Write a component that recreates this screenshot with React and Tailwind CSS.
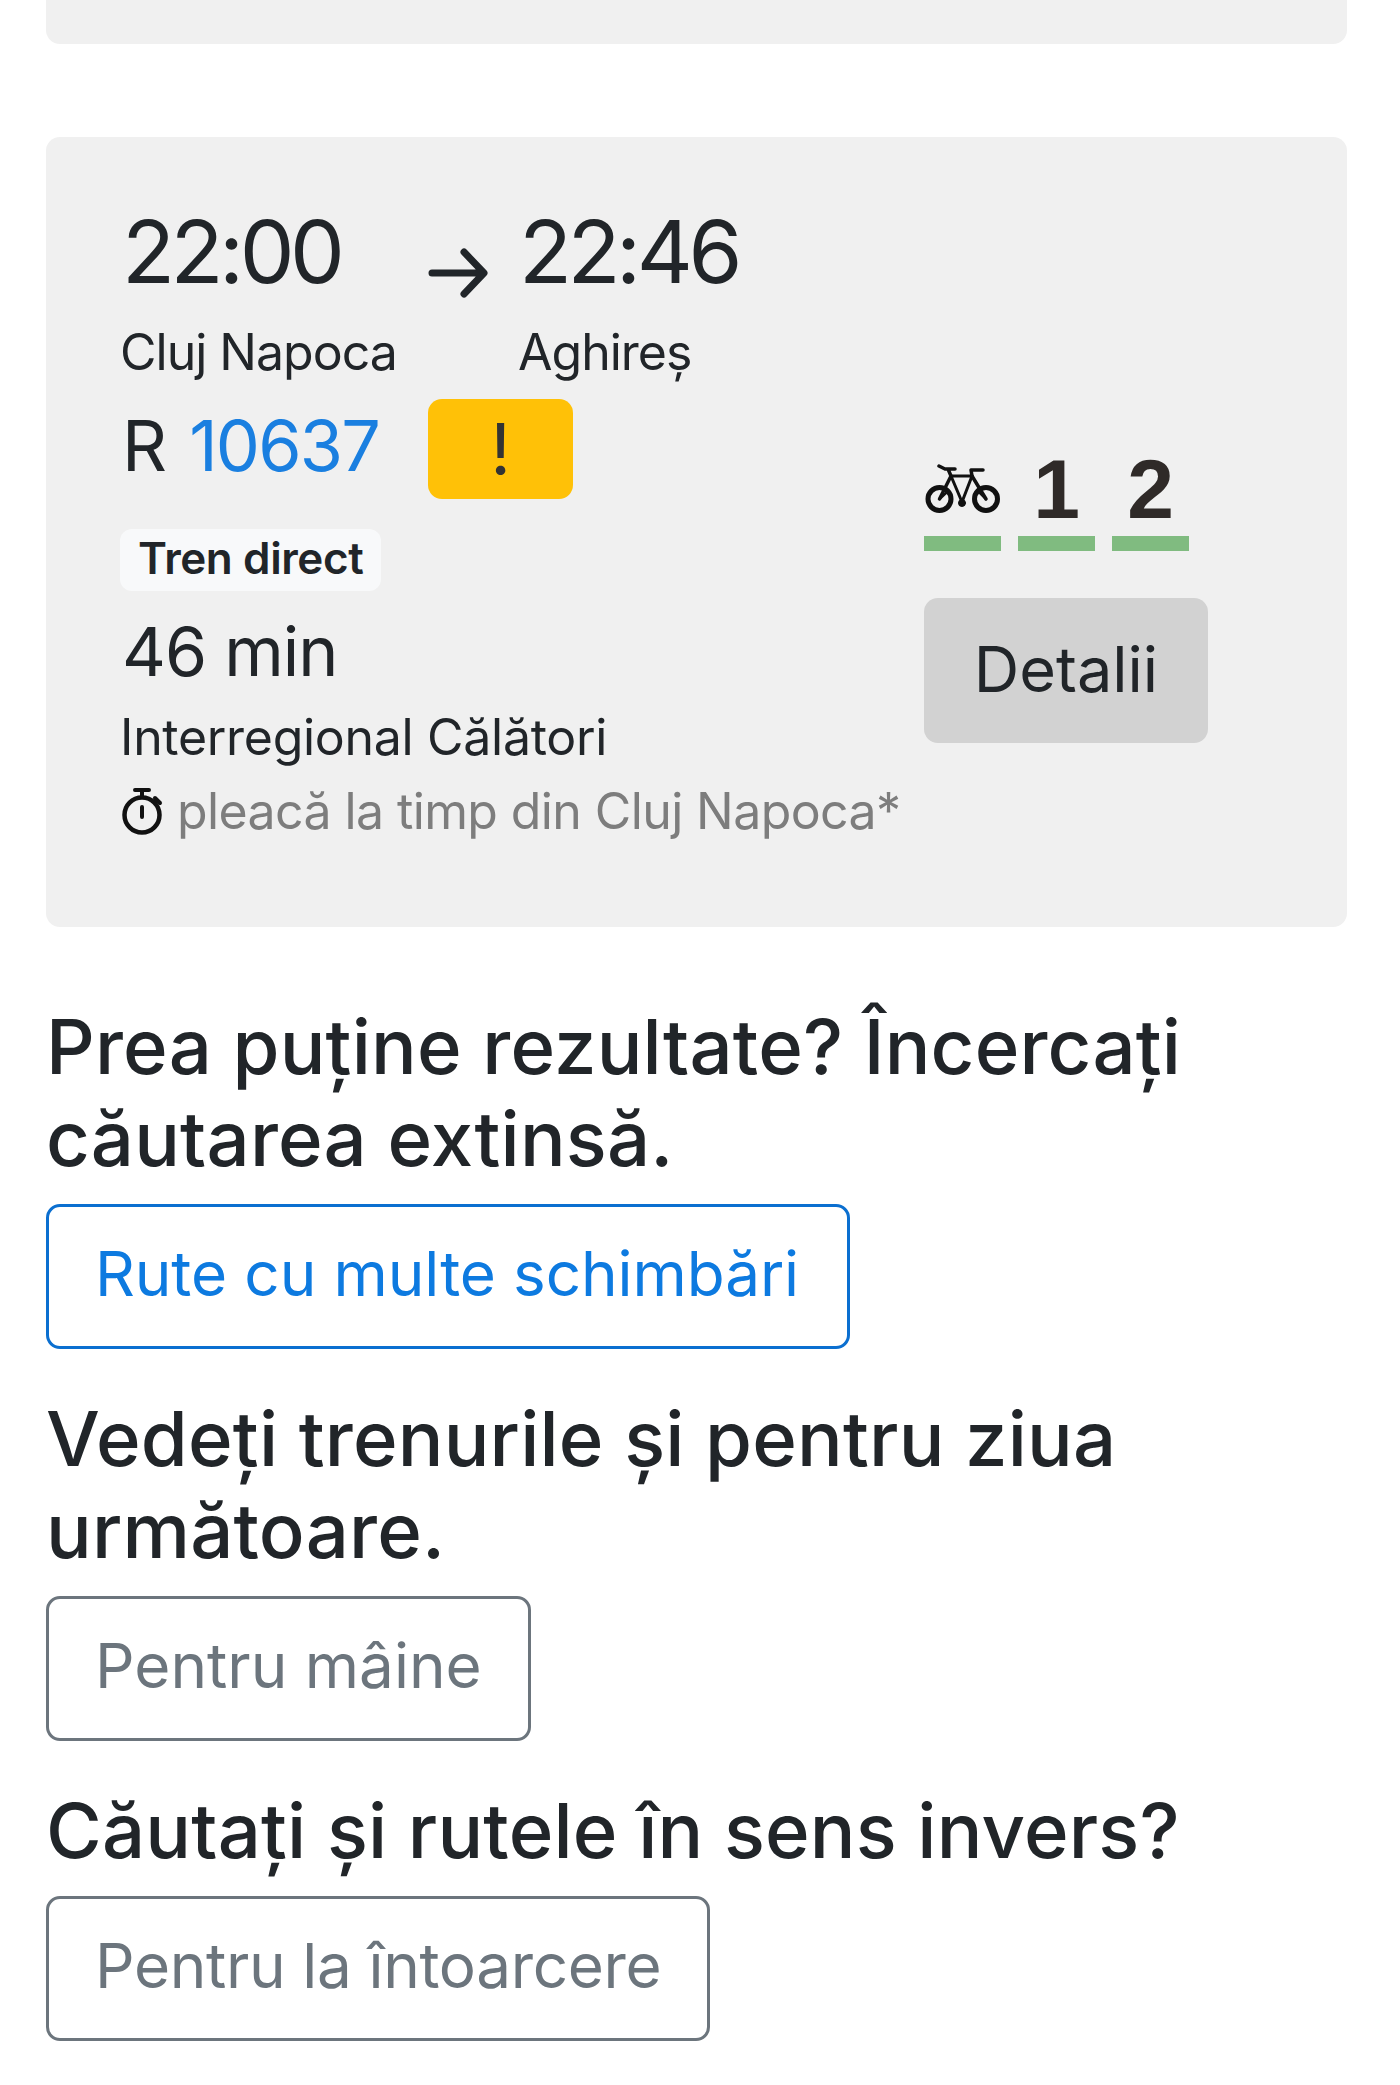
const BikeIcon = () => (
  <svg width="76" height="50" viewBox="0 0 76 50" fill="none" stroke="#111" strokeLinecap="round" strokeLinejoin="round">
    <circle cx="14.5" cy="35" r="11.5" strokeWidth="5" />
    <circle cx="61" cy="35" r="11.5" strokeWidth="5" />
    <path d="M14.5 35 L22 28" strokeWidth="2.5" />
    <path d="M61 35 L53 27" strokeWidth="2.5" />
    <path d="M26 12 L47 12 L37 38 Z" strokeWidth="3" />
    <path d="M14.5 35 L26 12 M47 12 L61 35" strokeWidth="3.5" />
    <path d="M47 12 L46 6 L58 6" strokeWidth="3.5" />
    <path d="M14 2 L20 5 L30 5 M23 5 L26 12" strokeWidth="3.5" />
    <circle cx="37" cy="39" r="3.5" fill="#111" strokeWidth="1" />
  </svg>
);

const ArrowIcon = () => (
  <svg width="60" height="52" viewBox="0 0 60 52" fill="none" stroke="#212529" strokeWidth="7" strokeLinecap="round" strokeLinejoin="round">
    <path d="M4 26 H55 M36 5 L56 26 L36 47" />
  </svg>
);

const StopwatchIcon = () => (
  <svg width="42" height="49" viewBox="0 0 42 49" fill="none" stroke="#111" strokeLinecap="round" className="mr-[13px] shrink-0">
    <circle cx="20" cy="28" r="17.5" strokeWidth="4.5" />
    <path d="M13 3 H27 M20 3 V10 M20 20 V30" strokeWidth="4" />
    <path d="M33 11 L38 16" strokeWidth="4" />
  </svg>
);

const Occupancy = ({ children }) => (
  <div className="w-[77px] flex flex-col items-center">
    <div className="h-[78px] pb-[16px] flex items-center justify-center">{children}</div>
    <div className="w-full h-[15px] bg-[#80bb80]"></div>
  </div>
);

const Suggestion = ({ title, children }) => (
  <div>
    <h2 className="text-[76px] leading-[92px] font-medium text-[#212529] tracking-[0.2px]">{title}</h2>
    {children}
  </div>
);

const btnBlue = "block mt-[20px] h-[145px] pl-[46px] pr-[48px] pb-[6px] rounded-[14px] border-[3px] border-[#0b6fd0] text-[#0d7ae0] text-[62px] tracking-[-0.1px] whitespace-nowrap";
const btnGrey = "block mt-[20px] h-[145px] pl-[46px] pr-[46px] pb-[6px] rounded-[14px] border-[3px] border-[#6c757d] text-[#6c757d] text-[62px] whitespace-nowrap";

export default function App() {
  return (
    <div className="min-h-[2085px] bg-white pl-[46px] pr-[53px] font-['Inter',sans-serif] text-[#212529]">
      <div className="h-[44px] bg-[#f0f0f0] rounded-b-[14px]"></div>

      <div className="mt-[93px] h-[790px] bg-[#f0f0f0] rounded-[14px] pl-[76px] pr-[139px] pt-[60px] flex justify-between">
        <div>
          <div className="flex items-start h-[110px]">
            <span className="w-[306px] text-[87px] leading-[110px] tracking-[-4.5px]">22:00</span>
            <span className="mt-[50px] w-[91px]"><ArrowIcon /></span>
            <span className="text-[87px] leading-[110px] tracking-[-4.5px]">22:46</span>
          </div>
          <div className="flex -ml-[2px] mt-[15px] text-[50px] leading-[60px] tracking-[-1px]">
            <span className="w-[398px]">Cluj Napoca</span>
            <span>Aghireș</span>
          </div>
          <div className="flex items-center mt-[17px] h-[100px]">
            <span className="w-[306px] pb-[8px] text-[70px] tracking-[-1.8px]">
              R <span className="ml-[6px] text-[#1a7fe0]">10637</span>
            </span>
            <span className="w-[145px] h-[100px] bg-[#ffc107] rounded-[14px] flex items-center justify-center text-[72px] text-[#333]">!</span>
          </div>
          <div className="mt-[30px] -ml-[2px] w-fit px-[18px] h-[62px] bg-[#f8f9fa] rounded-[12px] text-[44px] leading-[59px] font-semibold tracking-[-0.4px]">
            Tren direct
          </div>
          <div className="mt-[20px] text-[68px] leading-[80px] tracking-[-1px]">46 min</div>
          <div className="mt-[17px] -ml-[2px] text-[50px] leading-[58px] tracking-[-0.3px] whitespace-nowrap">Interregional Călători</div>
          <div className="mt-[16px] flex items-center">
            <StopwatchIcon />
            <span className="text-[50px] leading-[58px] text-[#7d7d7d] tracking-[-0.6px] whitespace-nowrap">pleacă la timp din Cluj Napoca*</span>
          </div>
        </div>

        <div className="w-[284px] pt-[261px]">
          <div className="flex gap-[17px] font-['Liberation_Sans',sans-serif] font-bold text-[84px] text-[#2f2a28]">
            <Occupancy><BikeIcon /></Occupancy>
            <Occupancy>1</Occupancy>
            <Occupancy>2</Occupancy>
          </div>
          <button className="block mt-[47px] pb-[3px] w-[284px] h-[145px] bg-[#d2d2d2] rounded-[14px] text-[63px]">Detalii</button>
        </div>
      </div>

      <div className="mt-[73px] flex flex-col gap-[43px]">
        <Suggestion title="Prea puține rezultate? Încercați căutarea extinsă.">
          <button className={btnBlue}>Rute cu multe schimbări</button>
        </Suggestion>
        <Suggestion title="Vedeți trenurile și pentru ziua următoare.">
          <button className={btnGrey}>Pentru mâine</button>
        </Suggestion>
        <Suggestion title="Căutați și rutele în sens invers?">
          <button className={btnGrey + " tracking-[-0.35px]"}>Pentru la întoarcere</button>
        </Suggestion>
      </div>
    </div>
  );
}
